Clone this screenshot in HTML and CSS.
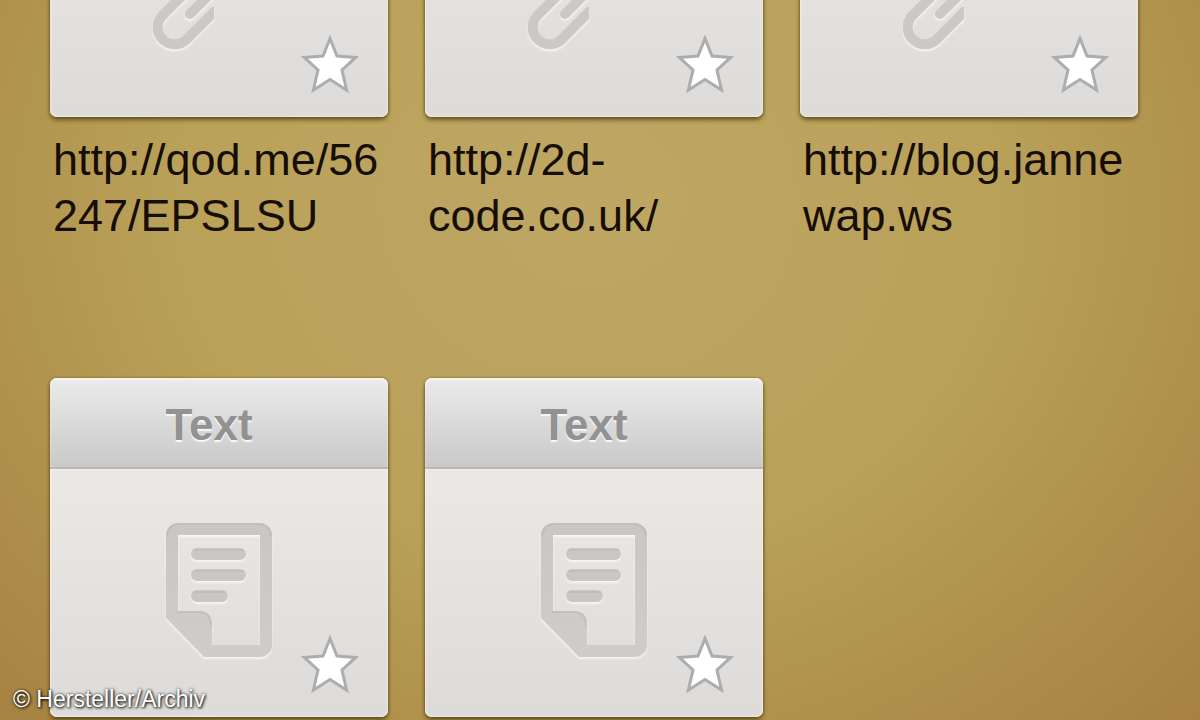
FILE: index.html
```html
<!DOCTYPE html>
<html lang="de">
<head>
    <meta charset="UTF-8">
    <meta name="viewport" content="width=device-width, initial-scale=1.0">
    <title>QR Code History</title>
    <link rel="stylesheet" href="styles.css">
</head>
<body>
    <!-- shared icons -->
    <svg class="defs" width="0" height="0" aria-hidden="true">
        <linearGradient id="docFill" x1="0" y1="0" x2="0" y2="1">
            <stop offset="0" stop-color="#c9c6c5"/>
            <stop offset="1" stop-color="#cfccca"/>
        </linearGradient>
        <clipPath id="hookEnd">
            <path d="M-5 0 H50 V84 L62 84 V134 H-5 Z"/>
        </clipPath>
        <symbol id="star" viewBox="0 0 60 62">
            <path d="M30 5.5 L37 23 L55.7 24.4 L42 37 L46.6 57 L30 46.5 L13.4 57 L18 37 L4.3 24.4 L23 23 Z"
                  fill="#fff" stroke="#adadad" stroke-width="3" stroke-miterlimit="8"/>
        </symbol>
        <symbol id="link" viewBox="0 0 134 134">
            <g fill="none" stroke="#cbc8c6" stroke-width="10">
                <path clip-path="url(#hookEnd)" d="M70 81 L34 117 A17 17 0 0 1 10 93 L44 59 A17 17 0 0 1 56 54"/>
                <path d="M38 91 L80 49" stroke-linecap="round"/>
                <path d="M68 49 L100 17 A17 17 0 0 1 124 41 L96 69"/>
            </g>
        </symbol>
        <symbol id="doc" viewBox="0 0 106 134">
            <path fill="url(#docFill)" fill-rule="evenodd" d="M12 0 H94 A12 12 0 0 1 106 12 V122 A12 12 0 0 1 94 134 H38 L0 95 V12 A12 12 0 0 1 12 0 Z
                     M12 12 V88 H33 Q46 88 46 102 V122 H94 V12 Z"/>
            <path d="M31 31 H74 M31 52 H74 M31 73 H56" stroke="#c9c6c5" stroke-width="12" stroke-linecap="round"/>
            <path d="M1 13 A12 12 0 0 1 13 1 H93 A12 12 0 0 1 105 13 M12 89 H33 Q45 89 45 102 M28 27 H77 M28 48 H77 M28 69 H59"
                  fill="none" stroke="#bdbab9" stroke-width="2" stroke-linecap="round" opacity="0.7"/>
        </symbol>
    </svg>

    <main class="history">
        <div class="item item-scrolled">
            <div class="card">
                <div class="card-body">
                    <svg class="icon icon-link"><use href="#link"/></svg>
                    <button class="favorite" aria-label="Favorit"><svg width="60" height="62"><use href="#star"/></svg></button>
                </div>
            </div>
            <a class="caption" href="http://qod.me/56247/EPSLSU">http://qod.me/56<br>247/EPSLSU</a>
        </div>
        <div class="item item-scrolled">
            <div class="card">
                <div class="card-body">
                    <svg class="icon icon-link"><use href="#link"/></svg>
                    <button class="favorite" aria-label="Favorit"><svg width="60" height="62"><use href="#star"/></svg></button>
                </div>
            </div>
            <a class="caption" href="http://2d-code.co.uk/">http://2d-<br>code.co.uk/</a>
        </div>
        <div class="item item-scrolled">
            <div class="card">
                <div class="card-body">
                    <svg class="icon icon-link"><use href="#link"/></svg>
                    <button class="favorite" aria-label="Favorit"><svg width="60" height="62"><use href="#star"/></svg></button>
                </div>
            </div>
            <a class="caption" href="http://blog.jannewap.ws">http://blog.janne<br>wap.ws</a>
        </div>

        <div class="item">
            <div class="card">
                <h2 class="card-title">Text</h2>
                <div class="card-body">
                    <svg class="icon icon-doc"><use href="#doc"/></svg>
                    <button class="favorite" aria-label="Favorit"><svg width="60" height="62"><use href="#star"/></svg></button>
                </div>
            </div>
        </div>
        <div class="item">
            <div class="card">
                <h2 class="card-title">Text</h2>
                <div class="card-body">
                    <svg class="icon icon-doc"><use href="#doc"/></svg>
                    <button class="favorite" aria-label="Favorit"><svg width="60" height="62"><use href="#star"/></svg></button>
                </div>
            </div>
        </div>
    </main>

    <div class="credit">© Hersteller/Archiv</div>
</body>
</html>
```
FILE: styles.css
```css
* {
    box-sizing: border-box;
}

body {
    margin: 0;
    height: 100vh;
    overflow: hidden;
    position: relative;
    font-family: "Liberation Sans", Arial, sans-serif;
    background: radial-gradient(ellipse 76% 110% at 49% 28%, #bea764 0%, #b9a159 45%, #ad8d49 75%, #a47d3d 100%);
}

.defs {
    position: absolute;
}

.history {
    display: grid;
    grid-template-columns: repeat(3, 1fr);
    column-gap: 37px;
    row-gap: 134px;
    padding: 0 62px 0 50px;
}

/* first row is scrolled halfway out of the window */
.item-scrolled {
    margin-top: -131px;
}

.card {
    border-radius: 7px;
    background: #dddbda;
    box-shadow: 0 3px 4px rgba(75, 58, 10, 0.7), 0 0 3px rgba(75, 58, 10, 0.5);
}

.card-title {
    margin: 0;
    height: 91px;
    padding-right: 20px;
    border-bottom: 2px solid #b9b9b9;
    border-radius: 7px 7px 0 0;
    background: linear-gradient(#ebebeb, #c9c9c9);
    box-shadow: inset 0 2px 2px #f7f4ec;
    color: #929292;
    font-size: 44px;
    line-height: 94px;
    text-align: center;
    text-shadow: 0 2px 1px #f8f8f8;
}

.card-body {
    position: relative;
    height: 248px;
    padding-top: 54px;
    border-radius: 0 0 7px 7px;
    background: linear-gradient(#ebe8e6, #dddbd9);
    box-shadow: inset 0 0 3px #fff8e8;
}

.icon {
    display: block;
    height: 134px;
    margin: 0 auto;
    filter: drop-shadow(0 2px 1px rgba(255, 255, 255, 0.7));
}

.icon-link {
    width: 134px;
}

.icon-doc {
    width: 106px;
}

.favorite {
    position: absolute;
    right: 28px;
    bottom: 22px;
    padding: 0;
    border: none;
    background: none;
    cursor: pointer;
}

.favorite svg {
    display: block;
}

.caption {
    display: block;
    margin-top: 15px;
    padding-left: 3px;
    color: #160d04;
    font-size: 45px;
    line-height: 56px;
    text-decoration: none;
    white-space: nowrap;
}

.credit {
    position: absolute;
    left: 13px;
    bottom: 7px;
    color: #fff;
    font-size: 23px;
    line-height: 28px;
    text-shadow: 1px 1px 3px #000, 0 0 3px rgba(0, 0, 0, 0.7);
}
```
